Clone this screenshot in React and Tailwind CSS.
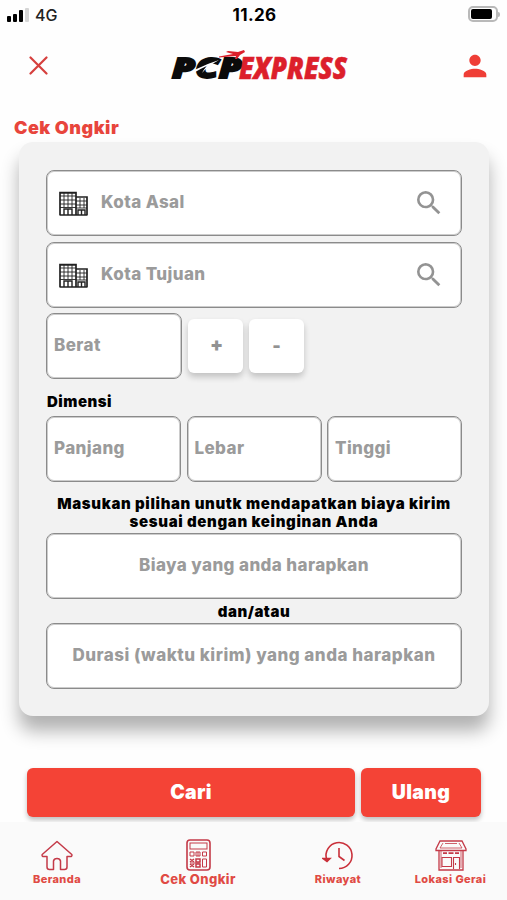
import { MdPerson, MdSearch } from 'react-icons/md'

function Logo() {
  return (
    <svg width="184" height="42" viewBox="0 0 184 42" className="overflow-visible font-['Open_Sans',sans-serif] font-extrabold italic">
      <text x="6" y="33" fontSize="29" fill="#0b0b0b" stroke="#0b0b0b" strokeWidth="1.800" textLength="70" lengthAdjust="spacingAndGlyphs">PCP</text>
      <text x="73" y="33.500" fontSize="30" fill="#dc1f2b" stroke="#dc1f2b" strokeWidth="0.600" textLength="108" lengthAdjust="spacingAndGlyphs">EXPRESS</text>
      <path d="M13 35 Q28 23 53 15 Q42 21 36 28 Q39 22 42 20.500 Q27 27 18 35Z" fill="#fff" />
      <path d="M53 11.500 L67 9 L60 7 L62 6 L72 7 L78 5 L79 7 L74 10 L71 14 L69 14 L70 11 L53 12.500Z" fill="#dc1f2b" />
    </svg>
  )
}

function Building() {
  return (
    <svg width="29" height="25" viewBox="0 0 29 25" fill="none" stroke="#222" className="shrink-0">
      <path d="M1 24V1.500h16V24M17 6h11v18M.5 24h28M1 2h16" strokeWidth="1.700" />
      <path d="M1 5h16M1 9h16M1 13h16M1 16.500h16M5 2v14M9 2v14M13 2v14M17 10h11M17 14h11M17 17h11M21 7v10M25 7v10" strokeWidth="0.900" />
      <path d="M5 24v-6h8v6M9 18v6M19 24v-5h7v5M22.500 19v5" strokeWidth="1.400" />
    </svg>
  )
}

function HomeIcon() {
  return (
    <svg width="32" height="31" viewBox="0 0 32 31" fill="none" stroke="#c43a48" strokeWidth="1.500" strokeLinejoin="round">
      <path d="M16 1.500 1.200 14.500Q.5 17 3.500 16.500H6V27Q6 29.500 8.500 29.500H12.500V21Q13 18.500 16 18.500T19.500 21V29.500H23.500Q26 29.500 26 27V16.500H28.500Q31.500 17 30.800 14.500Z" />
    </svg>
  )
}

function CalculatorIcon() {
  return (
    <svg width="25" height="32" viewBox="0 0 25 32" fill="none" stroke="#c43a48">
      <rect x="1" y="1" width="23" height="30" rx="3" strokeWidth="1.600" />
      <rect x="4" y="4" width="17" height="6" strokeWidth="1" />
      <path d="M4 13h4v4H4zM10 13h4v4h-4zM16.500 13h4v4h-4zM16.500 20h4v8h-4z" strokeWidth="1" />
      <path d="m4 20 4 3m0-3-4 3M10 20h4v3h-4zM4 25l4 3m0-3-4 3M10 25h4v3h-4z" strokeWidth="1.500" />
      <path d="M12 13v4M4 24h10" strokeWidth="1" />
    </svg>
  )
}

function HistoryIcon() {
  return (
    <svg width="32" height="30" viewBox="0 0 32 30" fill="none" stroke="#c9303a" strokeWidth="1.600">
      <path d="M4.500 19A13 13 0 1 1 17 28.500" />
      <path d="M17 8v8.500l5.500 4" />
      <path d="M1 18.500h7L5 21.500Z" fill="#c9303a" />
    </svg>
  )
}

function StoreIcon() {
  return (
    <svg width="32" height="31" viewBox="0 0 32 31" fill="none" stroke="#c43a48">
      <path d="M5 1h22l4 8v1.500H1V9zM4 11v19h24V11" strokeWidth="1.300" />
      <path d="M8 3 5 8h22l-3-5M10 3.500h12M6 11v17M26 11v17" strokeWidth="0.800" />
      <path d="M8 13.200h4m1.500 0h5m1.500 0h4" strokeWidth="1.700" />
      <path d="M7 17.500h9.500v9H7zM18.500 29V17.500h6V29M20.500 23v2" strokeWidth="1.100" />
    </svg>
  )
}

function Field({ label, icon, className = '' }) {
  return (
    <div className={`flex h-[66px] items-center rounded-[8px] border border-[#8b8b8b] bg-white text-[17px] tracking-[0.4px] text-[#9b9b9b] shadow-[inset_0_0_0_1px_rgba(0,0,0,0.2)] ${className}`}>
      {icon && <Building />}
      <span className={icon ? 'ml-[13px] flex-1' : ''}>{label}</span>
      {icon && <MdSearch className="h-8 w-8 text-[#939393]" />}
    </div>
  )
}

const tabs = [
  { name: 'Beranda', icon: HomeIcon, style: 'w-[114px] text-[11px]' },
  { name: 'Cek Ongkir', icon: CalculatorIcon, style: 'w-[168px] text-[13px]' },
  { name: 'Riwayat', icon: HistoryIcon, style: 'w-[112px] text-[11px]' },
  { name: 'Lokasi Gerai', icon: StoreIcon, style: 'w-[113px] text-[11px]' },
]

export default function App() {
  return (
    <div className="flex h-[900px] w-[507px] flex-col overflow-hidden bg-[#fefefe] font-['Inter',sans-serif] font-extrabold">
      <div className="grid h-[30px] shrink-0 grid-cols-3 items-center px-[7px]">
        <div className="flex items-center gap-[6px]">
          <div className="flex items-end gap-[2px]">
            <div className="h-[6px] w-1 rounded-[1px] bg-black" />
            <div className="h-[8px] w-1 rounded-[1px] bg-black" />
            <div className="h-[12px] w-1 rounded-[1px] bg-black" />
            <div className="h-[14px] w-1 rounded-[1px] bg-[#d5d5d5]" />
          </div>
          <span className="text-[16px] font-medium text-[#222]">4G</span>
        </div>
        <span className="pt-px pl-[2px] text-center text-[17px] font-bold tracking-[0.4px]">11.26</span>
        <div className="flex items-center justify-end pb-[2px]">
          <div className="h-[16px] w-[30px] rounded-[5px] border-2 border-[#b9b9b9] p-px">
            <div className="h-full w-[21px] rounded-[2px] bg-black" />
          </div>
          <div className="h-[5px] w-[2px] rounded-r bg-[#b9b9b9]" />
        </div>
      </div>

      <header className="flex h-[72px] shrink-0 items-center justify-between pr-[15px] pl-[29px]">
        <svg width="19" height="19" viewBox="0 0 19 19" stroke="#d63f3d" strokeWidth="2.200" strokeLinecap="round" className="mb-[2px]">
          <path d="m1.500 1.500 16 16m0-16-16 16" />
        </svg>
        <div className="ml-[9px]">
          <Logo />
        </div>
        <MdPerson className="h-[34px] w-[34px] text-[#ef3e36]" />
      </header>

      <h1 className="mt-[14px] ml-[14px] h-[26px] text-[18px] leading-6 font-black tracking-[0.500px] text-[#e8453c]">Cek Ongkir</h1>

      <main className="mx-[19px] h-[574px] w-[470px] shrink-0 rounded-[14px] bg-[#f2f2f2] px-[27px] pt-7 shadow-[0_15px_18px_rgba(0,0,0,0.3)]">
        <Field label="Kota Asal" icon className="pr-4 pl-3" />
        <Field label="Kota Tujuan" icon className="mt-[6px] pr-4 pl-3" />
        <div className="mt-[5px] flex items-center gap-[6px]">
          <Field label="Berat" className="w-[136px] pl-[7px]" />
          <button className="mb-[1px] h-[54px] w-[55px] rounded-[6px] bg-white pl-[2px] text-[19px] font-black text-[#929292] shadow-[0_4px_6px_rgba(0,0,0,0.2)]">+</button>
          <button className="mb-[1px] h-[54px] w-[55px] rounded-[6px] bg-white text-[18px] font-black text-[#929292] shadow-[0_4px_6px_rgba(0,0,0,0.2)]">-</button>
        </div>
        <p className="mt-[14px] ml-px h-[23px] text-[15px] leading-[18px] font-black tracking-[0.5px]">Dimensi</p>
        <div className="flex justify-between">
          <Field label="Panjang" className="w-[135px] pl-[7px]" />
          <Field label="Lebar" className="w-[135px] pl-[7px]" />
          <Field label="Tinggi" className="w-[135px] pl-[7px]" />
        </div>
        <p className="mt-[13px] mb-[3px] text-center text-[15px] leading-[17.500px] font-black tracking-[0.65px]">
          Masukan pilihan unutk mendapatkan biaya kirim
          <br />
          sesuai dengan keinginan Anda
        </p>
        <Field label="Biaya yang anda harapkan" className="justify-center" />
        <p className="mt-[4px] mb-[2px] text-center text-[15px] leading-[18px] font-black tracking-[0.5px]">dan/atau</p>
        <Field label="Durasi (waktu kirim) yang anda harapkan" className="justify-center tracking-[0.5px]" />
      </main>

      <div className="mt-[52px] mr-[26px] ml-[27px] flex h-[49px] shrink-0 gap-[6px] text-[19.500px] font-black tracking-[0.3px] text-white">
        <button className="w-[328px] rounded-[6px] bg-[#f44336] shadow-[0_3px_5px_rgba(0,0,0,0.25)]">Cari</button>
        <button className="w-[120px] rounded-[6px] bg-[#f44336] shadow-[0_3px_5px_rgba(0,0,0,0.25)]">Ulang</button>
      </div>

      <nav className="mt-[5px] flex h-[78px] shrink-0 bg-[#fafafa]">
        {tabs.map((tab) => {
          const Icon = tab.icon
          return (
            <div key={tab.name} className={`flex flex-col items-center pt-[17px] tracking-[0.4px] text-[#e04a44] ${tab.style}`}>
              <div className="flex h-[32px] items-center">
                <Icon />
              </div>
              <span className="leading-[16px]">{tab.name}</span>
            </div>
          )
        })}
      </nav>
    </div>
  )
}
